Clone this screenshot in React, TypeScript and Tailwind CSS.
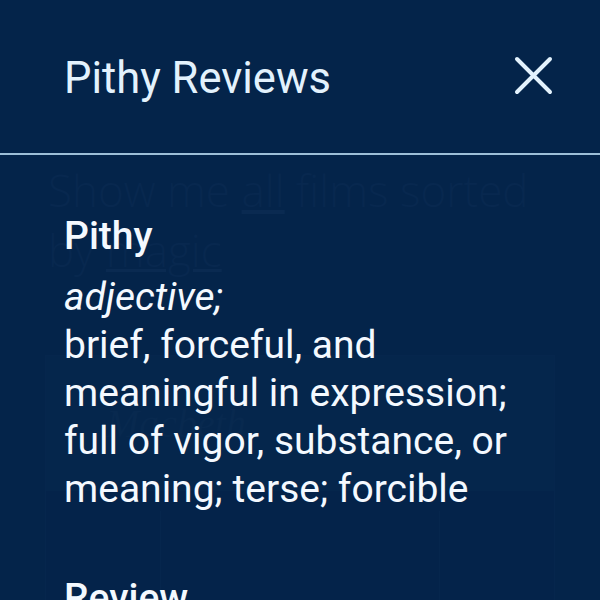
import React from "react";

function CloseIcon() {
  return (
    <svg width="39" height="39" viewBox="0 0 39 39" fill="none">
      <path
        d="M3 3 L36 36 M36 3 L3 36"
        stroke="#e3f2fd"
        strokeWidth="4"
        strokeLinecap="round"
      />
    </svg>
  );
}

function BackgroundPage() {
  return (
    <div className="flex flex-col pt-[160px]">
      <p
        className="pl-[48px] pr-[40px] text-[44px] leading-[60px] font-light text-[#08284f]"
        style={{ fontFamily: '"Open Sans", sans-serif' }}
      >
        Show me <span className="underline decoration-[#0a2a51]">all</span> films sorted by{" "}
        <span className="underline decoration-[3px] decoration-[#0a2a51]">magic</span>
      </p>
      <div className="mx-[45px] mt-[75px] flex flex-col border border-[#06264d] bg-[#05264c]">
        <div className="flex h-[135px] items-center pl-[60px]">
          <span
            className="text-[40px] italic text-[#08294f]"
            style={{ fontFamily: '"Liberation Serif", serif' }}
          >
            Macbeth
          </span>
        </div>
        <div className="flex h-[140px] justify-center bg-[#04234a]">
          <div className="mt-[20px] h-[120px] w-[280px] border-l border-r border-[#06264d]" />
        </div>
      </div>
    </div>
  );
}

export default function App() {
  return (
    <div
      className="relative h-[600px] w-[600px] overflow-hidden bg-[#04244a]"
      style={{ fontFamily: "Roboto, sans-serif" }}
    >
      <BackgroundPage />
      <div className="absolute inset-0 flex flex-col">
        <header className="flex h-[153px] shrink-0 items-center justify-between pl-[64px] pr-[47px]">
          <h1 className="mt-[5px] text-[43.5px] leading-[52px] font-normal text-[#e3f2fd]">
            Pithy Reviews
          </h1>
          <button className="mb-[3px] flex items-center justify-center">
            <CloseIcon />
          </button>
        </header>
        <div className="h-[2px] shrink-0 bg-[#9dbfd8]" />
        <div className="flex flex-col px-[64px] pt-[57px] text-[#f4f9ff]">
          <h2 className="text-[39px] leading-[48px] font-medium">Pithy</h2>
          <p className="mt-[13px] text-[39px] leading-[48px]">
            <em>adjective;</em>
            <br />
            brief, forceful, and meaningful in expression; full of vigor, substance, or meaning;
            terse; forcible
          </p>
          <h2 className="mt-[61px] text-[39px] leading-[48px] font-medium">Review</h2>
        </div>
      </div>
    </div>
  );
}
